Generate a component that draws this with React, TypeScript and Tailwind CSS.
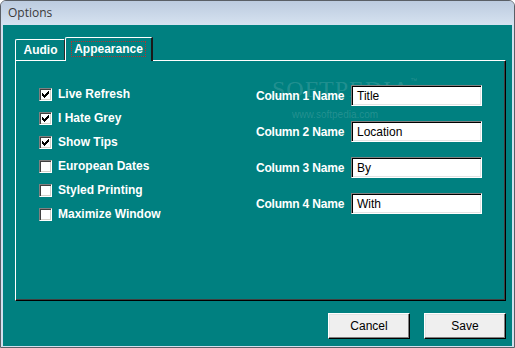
const checks = [
	{ label: "Live Refresh", on: true },
	{ label: "I Hate Grey", on: true },
	{ label: "Show Tips", on: true },
	{ label: "European Dates", on: false },
	{ label: "Styled Printing", on: false },
	{ label: "Maximize Window", on: false },
]

const columns = ["Title", "Location", "By", "With"]

const sans = { fontFamily: '"Liberation Sans", Arial, sans-serif' }

function CheckBox({ on }: { on: boolean }) {
	return (
		<div className="w-[13px] h-[13px] border border-t-[#808080] border-l-[#808080] border-b-white border-r-white bg-white shadow-[inset_1px_1px_0_#404040,inset_-1px_-1px_0_#d4d0c8] flex items-center justify-center">
			{on && (
				<svg width="7" height="7" viewBox="0 0 7 7" shapeRendering="crispEdges">
					<path d="M0 2h1v3H0zM1 3h1v3H1zM2 4h1v3H2zM3 3h1v3H3zM4 2h1v3H4zM5 1h1v3H5zM6 0h1v3H6z" fill="#000" />
				</svg>
			)}
		</div>
	)
}

function WinButton({ children }: { children: string }) {
	return (
		<button className="w-[82px] h-[26px] bg-[#efefef] border border-t-white border-l-white border-b-[#000] border-r-[#000] shadow-[inset_-1px_-1px_0_#808080,inset_1px_1px_0_#e3e3e3] text-[12px] text-black">
			{children}
		</button>
	)
}

export default function App() {
	return (
		<div className="w-[515px] h-[348px] flex flex-col bg-[#d3dfee] border border-[#5a5f66] rounded-t-[6px] overflow-hidden" style={sans}>
			<div className="h-[24px] shrink-0 flex items-center pl-[7px] bg-gradient-to-b from-[#bccbdf] to-[#d6e2f0]">
				<span className="text-[12px] text-[#3a3a3a]" style={{ fontFamily: '"Open Sans", "Liberation Sans", sans-serif' }}>
					Options
				</span>
			</div>
			<div className="flex-1 mx-[2px] mb-[1px] bg-[#008080] flex flex-col pl-[12px] pr-[6px] pt-[12px]">
				{/* tabs */}
				<div className="flex items-end h-[23px] relative z-10">
					<div className="w-[50px] h-[21px] border-t border-l border-white border-r border-r-[#2a2a2a] rounded-tl-[2px] flex items-center justify-center">
						<span className="text-white font-bold text-[12px] pl-[1px]">Audio</span>
					</div>
					<div className="w-[88px] h-[24px] -mb-px bg-[#008080] border-t border-l border-white border-r-2 border-r-[#1a1a1a] rounded-tl-[2px] flex items-start justify-center pt-[3px]">
						<span className="text-white font-bold text-[12px] px-[2px] leading-[14px] border border-dotted border-[#b83030]">
							Appearance
						</span>
					</div>
				</div>
				{/* panel */}
				<div className="w-[491px] h-[241px] border-t border-l border-white border-r border-b border-r-black border-b-black shadow-[inset_-1px_-1px_0_#404040] flex pl-[23px]">
					<div className="w-[217px] flex flex-col gap-[11px] pt-[27px]">
						{checks.map((c) => (
							<div key={c.label} className="h-[13px] flex items-center gap-[6px]">
								<CheckBox on={c.on} />
								<span className="text-white font-bold text-[12px] leading-[13px]">{c.label}</span>
							</div>
						))}
					</div>
					<div className="flex flex-col gap-[15px] pt-[24px] relative">
						<div className="absolute left-[16px] top-[16px] pointer-events-none text-white/15 leading-none">
							<span className="text-[24px] tracking-[1px]" style={{ fontFamily: '"Liberation Serif", serif' }}>SOFTPEDIA</span>
							<span className="text-[7px] align-top">™</span>
							<div className="text-[10px] pl-[20px] mt-[9px]">www.softpedia.com</div>
						</div>
						{columns.map((v, i) => (
							<div key={v} className="h-[21px] flex items-center relative">
								<span className="w-[95px] text-white font-bold text-[12px] tracking-[-0.2px]">Column {i + 1} Name</span>
								<div className="w-[131px] h-[21px] bg-white border border-t-[#808080] border-l-[#808080] border-b-white border-r-white shadow-[inset_1px_1px_0_#000,inset_-1px_-1px_0_#e3e3e3] flex items-center pl-[5px] text-[12px] text-black">
									{v}
								</div>
							</div>
						))}
					</div>
				</div>
				{/* buttons */}
				<div className="flex justify-end gap-[14px] mt-[12px]">
					<WinButton>Cancel</WinButton>
					<WinButton>Save</WinButton>
				</div>
			</div>
		</div>
	)
}
